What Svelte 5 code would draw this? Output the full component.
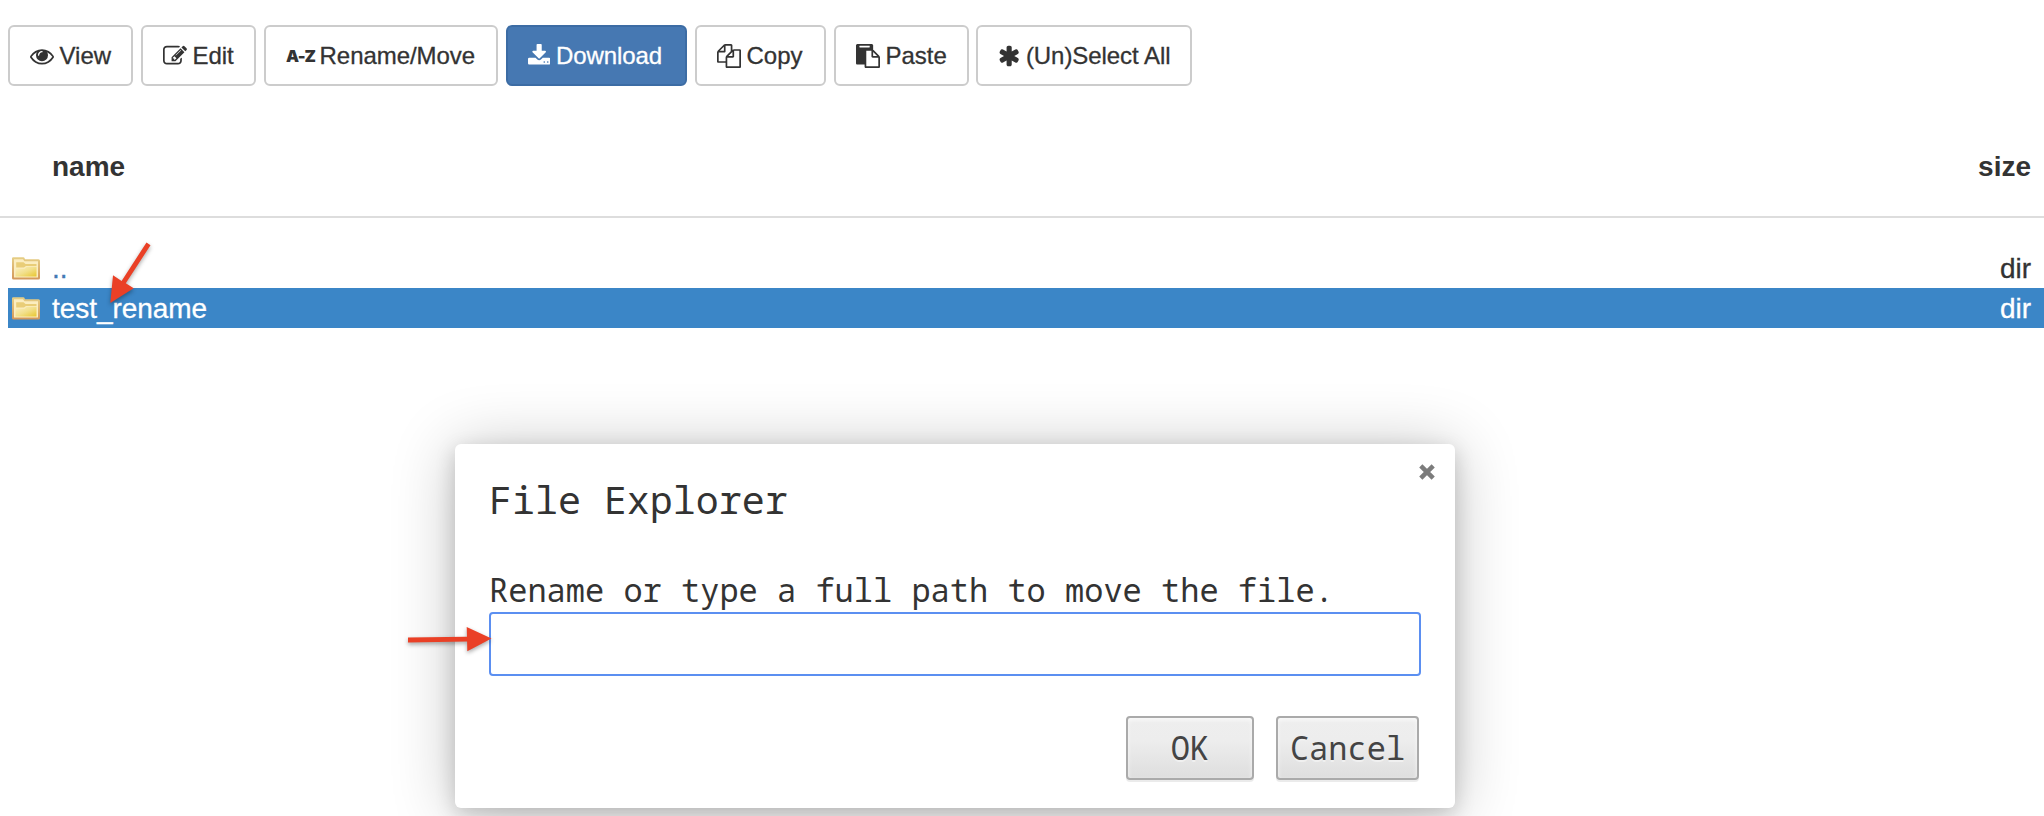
<script>
  const eye = 'M1664 960q-152-236-381-353 61 104 61 225 0 185-131.5 316.5t-316.5 131.5-316.5-131.5-131.5-316.5q0-121 61-225-229 117-381 353 133 205 333.5 326.5t434.5 121.5 434.5-121.5 333.5-326.5zm-720-384q0-20-14-34t-34-14q-125 0-214.5 89.5t-89.5 214.5q0 20 14 34t34 14 34-14 14-34q0-86 61-147t147-61q20 0 34-14t14-34zm848 384q0 34-20 69-140 230-376.5 368.5t-499.5 138.5-499.5-139-376.5-368q-20-35-20-69t20-69q140-229 376.5-368t499.5-139 499.5 139 376.5 368q20 35 20 69z';
  const edit = 'M888 1184l116-116-152-152-116 116v56h96v96h56zm440-720q-16-16-33 1l-350 350q-17 17-1 33t33-1l350-350q17-17 1-33zm80 594v190q0 119-84.5 203.5t-203.5 84.5h-832q-119 0-203.5-84.5t-84.5-203.5v-832q0-119 84.5-203.5t203.5-84.5h832q63 0 117 25 15 7 18 23 3 17-9 29l-49 49q-14 14-32 8-23-6-45-6h-832q-66 0-113 47t-47 113v832q0 66 47 113t113 47h832q66 0 113-47t47-113v-126q0-13 9-22l64-64q15-15 35-7t20 29zm-96-738l288 288-672 672h-288v-288zm444 132l-92 92-288-288 92-92q28-28 68-28t68 28l152 152q28 28 28 68t-28 68z';
  const download = 'M1344 1344q0-26-19-45t-45-19-45 19-19 45 19 45 45 19 45-19 19-45zm256 0q0-26-19-45t-45-19-45 19-19 45 19 45 45 19 45-19 19-45zm128-224v320q0 40-28 68t-68 28h-1472q-40 0-68-28t-28-68v-320q0-40 28-68t68-28h465l135 136q58 56 136 56t136-56l136-136h464q40 0 68 28t28 68zm-325-569q17 41-14 70l-448 448q-18 19-45 19t-45-19l-448-448q-31-29-14-70 17-39 59-39h256v-448q0-26 19-45t45-19h256q26 0 45 19t19 45v448h256q42 0 59 39z';
  const copy = 'M1696 384q40 0 68 28t28 68v1216q0 40-28 68t-68 28h-960q-40 0-68-28t-28-68v-288h-544q-40 0-68-28t-28-68v-672q0-40 20-88t48-76l408-408q28-28 76-48t88-20h416q40 0 68 28t28 68v328q68-40 128-40h416zm-544 213l-299 299h299v-299zm-640-384l-299 299h299v-299zm196 647l316-316v-416h-384v416q0 40-28 68t-68 28h-416v640h512v-256q0-40 20-88t48-76zm956 804v-1152h-384v416q0 40-28 68t-68 28h-416v640h896z';
  const paste = 'M768 1664h896v-640h-416q-40 0-68-28t-28-68v-416h-384v1152zm256-1440v-64q0-13-9.5-22.5t-22.5-9.5h-704q-13 0-22.5 9.5t-9.5 22.5v64q0 13 9.5 22.5t22.5 9.5h704q13 0 22.5-9.5t9.5-22.5zm256 672h299l-299-299v299zm512 128v672q0 40-28 68t-68 28h-960q-40 0-68-28t-28-68v-160h-544q-40 0-68-28t-28-68v-1344q0-40 28-68t68-28h1088q40 0 68 28t28 68v328q21 13 36 28l408 408q28 28 48 76t20 88z';
  const asterisk = 'M1546 1050q46 26 59.5 77.5t-12.5 97.5l-64 110q-26 46-77.5 59.5t-97.5-12.5l-266-153v307q0 52-38 90t-90 38h-128q-52 0-90-38t-38-90v-307l-266 153q-46 26-97.5 12.5t-77.5-59.5l-64-110q-26-46-12.5-97.5t59.5-77.5l266-154-266-154q-46-26-59.5-77.5t12.5-97.5l64-110q26-46 77.5-59.5t97.5 12.5l266 153v-307q0-52 38-90t90-38h128q52 0 90 38t38 90v307l266-153q46-26 97.5-12.5t77.5 59.5l64 110q26 46 12.5 97.5t-59.5 77.5l-266 154z';

  const tools = [
    { label: 'View', path: eye, width: 125 },
    { label: 'Edit', path: edit, width: 115 },
    { label: 'Rename/Move', mark: 'A-Z', width: 234 },
    { label: 'Download', path: download, width: 181, narrow: true, primary: true },
    { label: 'Copy', path: copy, width: 131 },
    { label: 'Paste', path: paste, width: 135 },
    { label: '(Un)Select All', path: asterisk, width: 216, narrow: true }
  ];
  const rows = [
    { name: '..', size: 'dir', selected: false },
    { name: 'test_rename', size: 'dir', selected: true }
  ];
</script>

<main>
  <nav class="toolbar">
    {#each tools as tool}
      <button class="tool" class:primary={tool.primary} style="width: {tool.width}px">
        {#if tool.mark}
          <b class="mark">{tool.mark}</b>
        {:else}
          <svg class="glyph" class:narrow={tool.narrow} viewBox={tool.narrow ? '64 0 1664 1792' : '0 0 1792 1792'}><path d={tool.path} /></svg>
        {/if}
        <span>{tool.label}</span>
      </button>
    {/each}
  </nav>

  <header class="heading"><span>name</span><span>size</span></header>

  <section class="files">
    {#each rows as row}
      <div class="row" class:selected={row.selected}>
        <svg class="folder" viewBox="0 0 28 23">
          <defs>
            <linearGradient id="edge" x1="0" y1="0" x2="0" y2="1"><stop offset="0" stop-color="#e6cf86" /><stop offset="1" stop-color="#d3975a" /></linearGradient>
            <linearGradient id="face" x1="0" y1="0" x2="1" y2="1"><stop offset="0" stop-color="#fbf0c4" /><stop offset=".5" stop-color="#f2e08c" /><stop offset="1" stop-color="#e8c62e" /></linearGradient>
          </defs>
          <path d="M0 1.5Q0 .3 1.200 .3H11.500Q12.500 .3 13 2.200H26.500Q28 2.200 28 3.700V21Q28 22.600 26.500 22.600H1.500Q0 22.600 0 21Z" fill="url(#edge)" />
          <path d="M2 2.300H11L12.500 4.200H26V20.500H2Z" fill="#fbedc0" />
          <path d="M4.200 5.200H11.500L13.500 7H24.500V9H14L12 10.500H4.200Z" fill="#e9cd78" />
          <path d="M3.500 11.700H12.500L14.500 9.700H24.500V19.600H3.500Z" fill="url(#face)" />
        </svg>
        <span class="name">{row.name}</span>
        <span class="size">{row.size}</span>
      </div>
    {/each}
  </section>

  <div class="dialog" role="dialog">
    <svg class="close" viewBox="0 0 16 16"><path d="M1.800 1.800L14.200 14.200M14.200 1.800L1.800 14.200" /></svg>
    <h1>File Explorer</h1>
    <label for="path">Rename or type a full path to move the file.</label>
    <input id="path" type="text" />
    <div class="actions"><button class="ok">OK</button><button class="cancel">Cancel</button></div>
  </div>

  <svg class="arrows" viewBox="0 0 2044 816">
    <path d="M146.500 242.500L150.500 245.200L125.800 283.200L133.700 288.300L110.300 303L113 275.300L121.600 280.900Z" />
    <path d="M408 637.600L467 636.700L466.700 627L491.500 638.500L467.300 651.300L467.100 641.500L408 642.500Z" />
  </svg>
</main>

<style>
  :global(body) { margin: 0; background: #fff; overflow: hidden; }
  main { position: relative; height: 816px; overflow: hidden; font: 28px/40px "Liberation Sans", Arial, sans-serif; color: #333; }
  button { font: inherit; color: inherit; margin: 0; box-sizing: border-box; }
  .toolbar { display: flex; gap: 8px; padding: 25px 8px 0; }
  .tool { display: flex; align-items: center; gap: 5.6px; height: 61px; padding: 0 0 0 20px; border: 2px solid #ccc; border-radius: 6px; background: #fff; font-size: 24px; line-height: 34px; letter-spacing: -0.06px; white-space: nowrap; }
  .tool span { -webkit-text-stroke: .3px currentColor; }
  .tool:last-child { margin-left: -1px; }
  .tool.primary { background: #4678b2; border-color: #3c6ca4; color: #fff; }
  .glyph { width: 24px; height: 24px; fill: currentColor; flex: none; }
  .glyph.narrow { width: 22.3px; }
  .mark { font: 900 16.5px/24px Inter, sans-serif; letter-spacing: -0.9px; width: 28px; }
  .heading { display: flex; justify-content: space-between; height: 130px; box-sizing: border-box; margin-top: 2px; padding: 59px 13px 0 52px; border-bottom: 2px solid #ddd; font-weight: bold; }
  .files { padding: 30px 0 0 8px; }
  .row { display: flex; align-items: center; height: 40px; padding: 0 13px 0 4px; }
  .row.selected { background: #3b86c7; color: #fff; }
  .row span { padding-top: 2px; -webkit-text-stroke: .3px currentColor; }
  .folder { width: 28px; height: 23px; margin-right: 12px; }
  .name { flex: 1; color: #4479b5; letter-spacing: -0.06px; }
  .selected .name { color: #fff; }
  .dialog { position: absolute; left: 455px; top: 444px; width: 1000px; height: 364px; box-sizing: border-box; padding: 27px 34px; border-radius: 6px; background: #fff; box-shadow: 0 6px 20px rgba(0, 0, 0, .17), 0 4px 64px rgba(0, 0, 0, .24); font: 32px/40px "Noto Sans Mono", "Droid Sans Mono", "DejaVu Sans Mono", monospace; }
  h1 { margin: 0; font: inherit; font-size: 38.3px; line-height: 56px; }
  label { display: block; margin-top: 43px; height: 42px; }
  input { display: block; width: 932px; height: 64px; box-sizing: border-box; border: 2px solid #5b8ff1; border-radius: 4px; background: #fff; outline: none; }
  .actions { display: flex; justify-content: flex-end; gap: 22px; padding: 40px 2px 0 0; }
  .actions button { height: 64px; padding: 0; border: 2px solid #aaa; border-radius: 4px; background: linear-gradient(#eee, #ededed 38%, #dedede); box-shadow: 0 2px 0 rgba(0, 0, 0, .08), inset 0 2px 4px rgba(255, 255, 255, .75); color: #444; text-shadow: 0 2px 0 #f0f0f0; }
  .ok { width: 128px; }
  .cancel { width: 143px; }
  .close { position: absolute; right: 20px; top: 20px; width: 16px; height: 16px; stroke: #7c7c7c; stroke-width: 4.5; }
  .arrows { position: absolute; inset: 0; width: 2044px; height: 816px; fill: #ea4026; filter: drop-shadow(0 2px 2px rgba(0, 0, 0, .35)); pointer-events: none; }
</style>
